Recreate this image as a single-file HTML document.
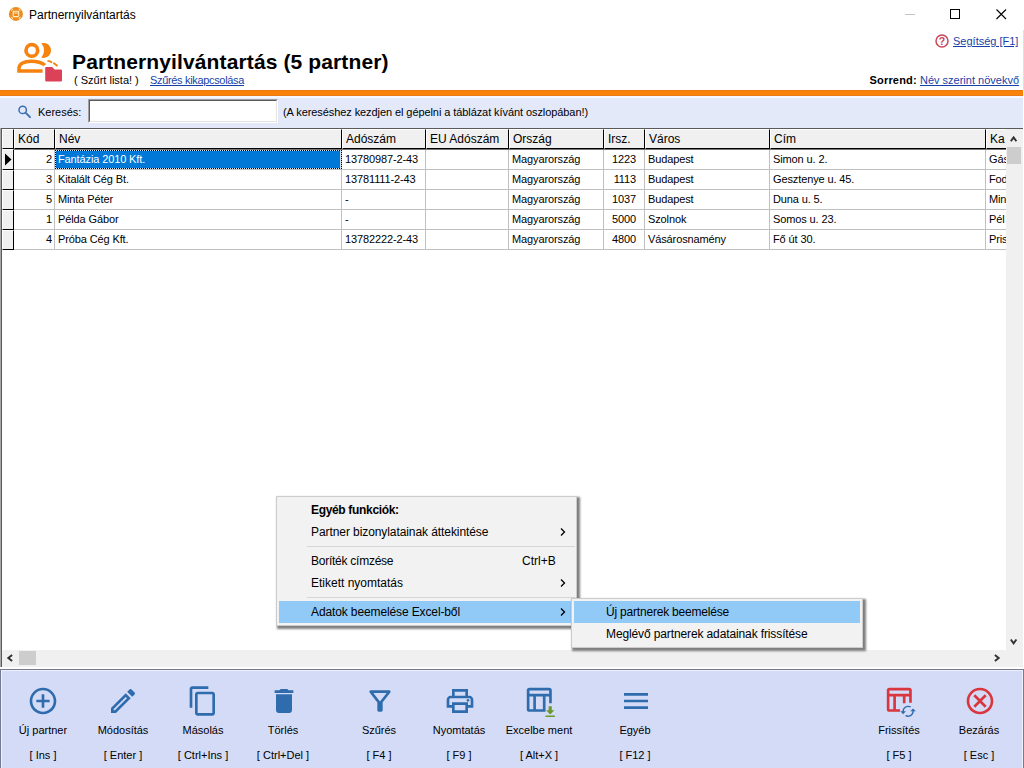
<!DOCTYPE html>
<html lang="hu">
<head>
<meta charset="utf-8">
<title>Partnernyilvántartás</title>
<style>
*{box-sizing:border-box;margin:0;padding:0}
html,body{width:1024px;height:768px;overflow:hidden;background:#fff}
body{position:relative;font-family:"Liberation Sans",sans-serif;font-size:11px;color:#000;line-height:14px}
.abs{position:absolute;white-space:nowrap}
a,.lnk{color:#173fa8;text-decoration:underline}
/* title bar */
#tbtext{left:29px;top:8px;font-size:12px;line-height:15px;color:#000}
/* header */
#h1{left:72px;top:49px;font-size:21px;line-height:26px;font-weight:bold;letter-spacing:.120px}
#sub1{left:74px;top:73px}
#sub2{left:150px;top:73px;letter-spacing:-.330px}
#help{left:953px;top:34px}
#sorr{right:5px;top:73px}
#obar{left:0;top:90px;width:1023px;height:6px;background:#fb8209;border-top:1px solid #e9790f;border-bottom:1px solid #e67a14}
#sbar{left:0;top:96px;width:1023px;height:32px;background:#e4e9fa;border-top:2px solid #f6f7fd}
#slabel{left:38px;top:105px}
#sinput{left:88px;top:99px;width:190px;height:24px;background:#fff;border:1px solid;border-color:#a0a0a0 #fff #fff #a0a0a0}
#sinput i{display:block;width:100%;height:100%;border:1px solid;border-color:#5a5a5a #e3e3e3 #e3e3e3 #5a5a5a}
#shint{left:283px;top:105px;letter-spacing:-.080px}
/* grid */
#grid{left:1px;top:128px;width:1022px;height:539px;background:#fff;border:1px solid #5a5a5a;border-right:none;border-bottom:none;overflow:hidden}
#gl{left:0;top:128px;width:1px;height:539px;background:#a8a8a8}
.hc{position:absolute;top:0;height:20px;background:#f0f0f0;border:1px solid;border-color:#fff #000 #000 #fff;padding:2px 0 0 3px;font-size:12px;line-height:14px;white-space:nowrap;overflow:hidden}
.ic{position:absolute;left:0;width:12px;background:#f0f0f0;border:1px solid;border-color:#fff #000 #000 #fff}
.row{position:absolute;left:12px;height:20px;width:1040px;border-bottom:1px solid #c0c0c0}
.c{position:absolute;top:0;height:20px;border-right:1px solid #c0c0c0;padding:2px 2px 0 3px;white-space:nowrap;overflow:hidden;letter-spacing:-.120px}
.r0 .c{padding-top:3px}
.c.z{padding-right:8px}
.r{text-align:right}
.r0 .c.sel{background:#0078d7;color:#fff;outline:1px dotted #000;outline-offset:-1px;box-shadow:inset 0 0 0 1px #d8e4f0;top:1px;height:19px;padding-top:2px}
#hl2{position:absolute;left:12px;top:20px;width:993px;height:1px;background:#777}
/* scrollbars */
#vs{left:1006px;top:129px;width:17px;height:521px;background:#f0f0f0}
#hs{left:2px;top:650px;width:1021px;height:17px;background:#f0f0f0}
/* toolbar */
#tb{left:0;top:669px;width:1024px;height:105px;background:#d4dbf6;border:1px solid #747a90;box-shadow:inset 0 0 0 1px #eef1fc}
.btn{position:absolute;top:0;width:80px;height:100px;text-align:center}
.btn svg{position:absolute;left:24px;top:14.700px;width:32px;height:32px}
.btn .t{position:absolute;left:0;width:80px;top:53px}
.btn .k{position:absolute;left:0;width:80px;top:78px}
/* menu */
.menu{position:absolute;background:#f2f2f2;border:1px solid #ccc;box-shadow:2px 2px 2px 1px rgba(0,0,0,.5);font-size:12px;line-height:15px}
.mi{position:absolute;left:2px;height:22px;white-space:nowrap}
.mi span{position:absolute;top:4px}
.sep{position:absolute;height:1px;background:#d7d7d7}
.hl{background:#91c9f7}
</style>
</head>
<body>
<!-- title bar -->
<svg class="abs" style="left:8px;top:6px" width="16" height="16" viewBox="8 6 16 16"><circle cx="15.900" cy="13.900" r="7" fill="#ee8a1f"/><g stroke="#fde69a" stroke-width="1.100" stroke-linecap="round"><path d="M11.600 10.300l1.100-1.100M19.100 9.200l1.100 1.100M11.600 17.500l1.100 1.100M19.100 18.600l1.100-1.100"/></g><rect x="13.200" y="11.300" width="5.500" height="5.300" rx=".800" fill="none" stroke="#fdeec4" stroke-width="1.100"/><path d="M13.200 13h5.500" stroke="#fdeec4" stroke-width=".900"/></svg>
<div class="abs" id="tbtext">Partnernyilvántartás</div>
<svg class="abs" style="left:896px;top:0" width="128" height="30" viewBox="0 0 128 30"><path d="M9 14.5h10" stroke="#c4c4c4" stroke-width="1"/><rect x="54.5" y="9.5" width="9" height="9" fill="none" stroke="#000" stroke-width="1"/><path d="M100.5 9.5l9.5 9.5M110 9.5l-9.5 9.5" stroke="#000" stroke-width="1.1" fill="none"/></svg>

<!-- header -->
<svg class="abs" id="picon" style="left:12px;top:38px" width="56" height="50" viewBox="12 38 56 50">
<circle cx="31.850" cy="50.400" r="5.850" fill="none" stroke="#f6830f" stroke-width="3.700"/>
<path d="M42.600 71H19V68.200C19 63.600 24.500 61.250 31 61.250C37.500 61.250 42.300 62.900 45 65.300" fill="none" stroke="#f6830f" stroke-width="3.500"/>
<path d="M41.300 43.230A7.500 7.500 0 1 1 41.300 57.570A10.700 10.700 0 0 0 41.300 43.230z" fill="#f6830f"/>
<path d="M47.500 60.900C51.500 61.600 55.300 63.400 57.500 66.200" fill="none" stroke="#f6830f" stroke-width="1.900" stroke-dasharray="4.800 1.300 20"/>
<path d="M43.700 73V65.500H54l2 2.500H63.500V73z" fill="#fff"/>
<path d="M45.200 68a1 1 0 0 1 1-1h6l2.300 2.600h6.500a1 1 0 0 1 1 1v10a1 1 0 0 1-1 1H46.200a1 1 0 0 1-1-1z" fill="#dc4257"/>
</svg>
<div class="abs" id="h1">Partnernyilvántartás (5 partner)</div>
<div class="abs" id="sub1">( Szűrt lista! )</div>
<div class="abs lnk" id="sub2">Szűrés kikapcsolása</div>
<svg class="abs" style="left:934px;top:33px" width="16" height="16" viewBox="0 0 16 16"><circle cx="8" cy="8" r="6" fill="#fff" stroke="#c8465a" stroke-width="1.500"/><text x="8" y="11.700" font-family="Liberation Sans, sans-serif" font-size="10.500" font-weight="bold" fill="#c8465a" text-anchor="middle">?</text></svg>
<div class="abs lnk" id="help">Segítség [F1]</div>
<div class="abs" id="sorr"><b style="letter-spacing:.200px">Sorrend:</b> <span class="lnk">Név szerint növekvő</span></div>
<div class="abs" id="redge" style="left:1023px;top:30px;width:1px;height:60px;background:#e0e0e0"></div>
<div class="abs" id="obar"></div>

<!-- search bar -->
<div class="abs" id="sbar"></div>
<svg class="abs" style="left:17px;top:103px" width="16" height="16" viewBox="0 0 16 16"><circle cx="5.700" cy="6.900" r="3.700" fill="none" stroke="#3a6fb0" stroke-width="1.500"/><path d="M8.500 9.700l4.500 4.500" stroke="#3a6fb0" stroke-width="1.900" stroke-linecap="round"/></svg>
<div class="abs" id="slabel">Keresés:</div>
<div class="abs" id="sinput"><i></i></div>
<div class="abs" id="shint">(A kereséshez kezdjen el gépelni a táblázat kívánt oszlopában!)</div>

<!-- grid -->
<div class="abs" id="gl"></div>
<div class="abs" id="grid">
<div id="gridinner">
<div class="hc" style="left:0;width:12px"></div>
<div class="hc" style="left:12px;width:41px">Kód</div>
<div class="hc" style="left:53px;width:287px">Név</div>
<div class="hc" style="left:340px;width:84px">Adószám</div>
<div class="hc" style="left:424px;width:83px">EU Adószám</div>
<div class="hc" style="left:507px;width:95px">Ország</div>
<div class="hc" style="left:602px;width:41px">Irsz.</div>
<div class="hc" style="left:643px;width:125px">Város</div>
<div class="hc" style="left:768px;width:216px">Cím</div>
<div class="hc" style="left:984px;width:60px">Ka</div>
<div class="ic" style="top:20px;height:21px"></div>
<div class="row r0" style="top:20px;height:21px">
<div class="c r" style="left:0px;width:41px">2</div>
<div class="c sel" style="left:41px;width:287px">Fantázia 2010 Kft.</div>
<div class="c" style="left:328px;width:84px">13780987-2-43</div>
<div class="c" style="left:412px;width:83px"></div>
<div class="c" style="left:495px;width:95px">Magyarország</div>
<div class="c r z" style="left:590px;width:41px">1223</div>
<div class="c" style="left:631px;width:125px">Budapest</div>
<div class="c" style="left:756px;width:216px">Simon u. 2.</div>
<div class="c" style="left:972px;width:60px">Gás</div>
</div>
<div class="ic" style="top:41px;height:20px"></div>
<div class="row" style="top:41px;height:20px">
<div class="c r" style="left:0px;width:41px">3</div>
<div class="c" style="left:41px;width:287px">Kitalált Cég Bt.</div>
<div class="c" style="left:328px;width:84px">13781111-2-43</div>
<div class="c" style="left:412px;width:83px"></div>
<div class="c" style="left:495px;width:95px">Magyarország</div>
<div class="c r z" style="left:590px;width:41px">1113</div>
<div class="c" style="left:631px;width:125px">Budapest</div>
<div class="c" style="left:756px;width:216px">Gesztenye u. 45.</div>
<div class="c" style="left:972px;width:60px">Fod</div>
</div>
<div class="ic" style="top:61px;height:20px"></div>
<div class="row" style="top:61px;height:20px">
<div class="c r" style="left:0px;width:41px">5</div>
<div class="c" style="left:41px;width:287px">Minta Péter</div>
<div class="c" style="left:328px;width:84px">-</div>
<div class="c" style="left:412px;width:83px"></div>
<div class="c" style="left:495px;width:95px">Magyarország</div>
<div class="c r z" style="left:590px;width:41px">1037</div>
<div class="c" style="left:631px;width:125px">Budapest</div>
<div class="c" style="left:756px;width:216px">Duna u. 5.</div>
<div class="c" style="left:972px;width:60px">Min</div>
</div>
<div class="ic" style="top:81px;height:20px"></div>
<div class="row" style="top:81px;height:20px">
<div class="c r" style="left:0px;width:41px">1</div>
<div class="c" style="left:41px;width:287px">Példa Gábor</div>
<div class="c" style="left:328px;width:84px">-</div>
<div class="c" style="left:412px;width:83px"></div>
<div class="c" style="left:495px;width:95px">Magyarország</div>
<div class="c r z" style="left:590px;width:41px">5000</div>
<div class="c" style="left:631px;width:125px">Szolnok</div>
<div class="c" style="left:756px;width:216px">Somos u. 23.</div>
<div class="c" style="left:972px;width:60px">Pél</div>
</div>
<div class="ic" style="top:101px;height:20px"></div>
<div class="row" style="top:101px;height:20px">
<div class="c r" style="left:0px;width:41px">4</div>
<div class="c" style="left:41px;width:287px">Próba Cég Kft.</div>
<div class="c" style="left:328px;width:84px">13782222-2-43</div>
<div class="c" style="left:412px;width:83px"></div>
<div class="c" style="left:495px;width:95px">Magyarország</div>
<div class="c r z" style="left:590px;width:41px">4800</div>
<div class="c" style="left:631px;width:125px">Vásárosnamény</div>
<div class="c" style="left:756px;width:216px">Fő út 30.</div>
<div class="c" style="left:972px;width:60px">Pris</div>
</div>
<div id="hl2"></div>
<svg class="abs" style="left:3px;top:24px" width="7" height="13" viewBox="0 0 7 13"><path d="M0 0.500L6.500 6.500L0 12.500z" fill="#000"/></svg>
</div>
</div>
<div class="abs" id="vs"><svg class="abs" style="left:0;top:0" width="17" height="17" viewBox="0 0 17 17"><path d="M4.800 12.200L7.600 8.400l2.800 3.800" fill="none" stroke="#303030" stroke-width="1.900"/></svg><div class="abs" style="left:1px;top:18px;width:14px;height:17px;background:#cdcdcd"></div><svg class="abs" style="left:0;top:504px" width="17" height="17" viewBox="0 0 17 17"><path d="M4.800 6.500l2.800 3.800 2.800-3.800" fill="none" stroke="#303030" stroke-width="1.900"/></svg></div>
<div class="abs" id="hs"><svg class="abs" style="left:0;top:0" width="17" height="17" viewBox="0 0 17 17"><path d="M10.100 5L6.300 8l3.800 3" fill="none" stroke="#303030" stroke-width="1.900"/></svg><div class="abs" style="left:17px;top:1px;width:17px;height:14px;background:#cdcdcd"></div><svg class="abs" style="left:987px;top:0" width="17" height="17" viewBox="0 0 17 17"><path d="M5.900 5l3.800 3-3.800 3" fill="none" stroke="#303030" stroke-width="1.900"/></svg></div>

<!-- toolbar -->
<div class="abs" id="tb">
<div class="btn" style="left:2px"><svg viewBox="0 0 24 24"><path fill="#2f6cae" d="M13 7h-2v4H7v2h4v4h2v-4h4v-2h-4V7zm-1-5C6.480 2 2 6.480 2 12s4.480 10 10 10 10-4.480 10-10S17.520 2 12 2zm0 18c-4.410 0-8-3.590-8-8s3.590-8 8-8 8 3.590 8 8-3.590 8-8 8z"/></svg><div class="t">Új partner</div><div class="k">[ Ins ]</div></div>
<div class="btn" style="left:82px"><svg viewBox="0 0 24 24"><path fill="#2f6cae" d="M14.060 9.020l.920.920L5.920 19H5v-.920l9.060-9.060M17.660 3c-.250 0-.510.100-.700.290l-1.830 1.830 3.750 3.750 1.830-1.830c.390-.390.390-1.020 0-1.410l-2.340-2.340c-.200-.200-.450-.290-.710-.290zm-3.600 3.190L3 17.250V21h3.750L17.810 9.940l-3.750-3.750z"/></svg><div class="t">Módosítás</div><div class="k">[ Enter ]</div></div>
<div class="btn" style="left:162px"><svg style="margin-left:0.4px" viewBox="0 0 24 24"><path fill="#2f6cae" d="M16 1H4c-1.100 0-2 .900-2 2v14h2V3h12V1zm3 4H8c-1.100 0-2 .900-2 2v14c0 1.100.900 2 2 2h11c1.100 0 2-.900 2-2V7c0-1.100-.900-2-2-2zm0 16H8V7h11v14z"/></svg><div class="t">Másolás</div><div class="k">[ Ctrl+Ins ]</div></div>
<div class="btn" style="left:242px"><svg style="margin-left:0.5px" viewBox="0 0 24 24"><path fill="#2f6cae" d="M6 19c0 1.100.900 2 2 2h8c1.100 0 2-.900 2-2V7H6v12zM19 4h-3.500l-1-1h-5l-1 1H5v2h14V4z"/></svg><div class="t">Törlés</div><div class="k">[ Ctrl+Del ]</div></div>
<div class="btn" style="left:338px"><svg style="margin-left:0.9px" viewBox="0 0 24 24"><path fill="#2f6cae" d="M7 6h10l-5.010 6.300L7 6zm-2.750-.390C6.270 8.200 10 13 10 13v6c0 .550.450 1 1 1h2c.550 0 1-.450 1-1v-6s3.720-4.800 5.740-7.390c.510-.660.040-1.610-.790-1.610H5.040c-.830 0-1.300.950-.790 1.610z"/></svg><div class="t">Szűrés</div><div class="k">[ F4 ]</div></div>
<div class="btn" style="left:418px"><svg style="margin-left:0.9px" viewBox="0 0 24 24"><path fill="#2f6cae" d="M19 8h-1V3H6v5H5c-1.660 0-3 1.340-3 3v6h4v4h12v-4h4v-6c0-1.660-1.340-3-3-3zM8 5h8v3H8V5zm8 12v2H8v-4h8v2zm2-2v-2H6v2H4v-4c0-.550.450-1 1-1h14c.550 0 1 .450 1 1v4h-2z"/><circle cx="18" cy="11.500" r="1" fill="#2f6cae"/></svg><div class="t">Nyomtatás</div><div class="k">[ F9 ]</div></div>
<div class="btn" style="left:498px"><svg viewBox="0 0 24 24" style="overflow:visible"><path fill="none" stroke="#2f6cae" stroke-width="2" d="M20.600 13.700V4.100a1 1 0 0 0-1-1H4.850a1 1 0 0 0-1 1v14a1 1 0 0 0 1 1H15.900V7.600M3.850 7.600H20.600M8.700 7.600V19.100"/><path fill="#6b9a2c" d="M19.200 16h2.400v3h1.900l-3.100 3.100-3.100-3.100h1.900zM16.900 22.900h7v1.100h-7z"/></svg><div class="t">Excelbe ment</div><div class="k">[ Alt+X ]</div></div>
<div class="btn" style="left:594px"><svg style="margin-left:1.0px" viewBox="0 0 24 24"><path fill="#2f6cae" d="M3 18h18v-2H3v2zm0-5h18v-2H3v2zm0-7v2h18V6H3z"/></svg><div class="t">Egyéb</div><div class="k">[ F12 ]</div></div>
<div class="btn" style="left:858px"><svg viewBox="0 0 24 24" style="overflow:visible"><path fill="none" stroke="#d9363e" stroke-width="2" d="M20.600 13.300V4.100a1 1 0 0 0-1-1H4.850a1 1 0 0 0-1 1v14a1 1 0 0 0 1 1H12.800M3.850 7.600H20.600M8.700 7.600V19.100M15.900 7.600V13.600"/><g transform="translate(12.450 13.350) scale(0.531)"><path fill="#2f6cae" d="M19 8l-4 4h3c0 3.310-2.690 6-6 6-1.010 0-1.970-.250-2.800-.700l-1.460 1.460C8.970 19.540 10.430 20 12 20c4.420 0 8-3.580 8-8h3l-4-4zM6 12c0-3.310 2.690-6 6-6 1.010 0 1.970.250 2.800.700l1.460-1.460C15.030 4.460 13.570 4 12 4c-4.420 0-8 3.580-8 8H1l4 4 4-4H6z"/></g></svg><div class="t">Frissítés</div><div class="k">[ F5 ]</div></div>
<div class="btn" style="left:938px"><svg style="margin-left:1.0px" viewBox="0 0 24 24"><path fill="#d9363e" d="M12 2C6.470 2 2 6.470 2 12s4.470 10 10 10 10-4.470 10-10S17.530 2 12 2zm0 18c-4.410 0-8-3.590-8-8s3.590-8 8-8 8 3.590 8 8-3.590 8-8 8zm3.590-13L12 10.590 8.410 7 7 8.410 10.590 12 7 15.590 8.410 17 12 13.410 15.590 17 17 15.590 13.410 12 17 8.410z"/></svg><div class="t">Bezárás</div><div class="k">[ Esc ]</div></div>
</div>

<!-- menus -->
<div class="menu" style="left:276px;top:496px;width:301px;height:130px">
<div class="mi" style="top:2px;width:295px"><span style="left:32px;font-weight:bold;letter-spacing:-.330px">Egyéb funkciók:</span></div>
<div class="mi" style="top:24px;width:295px"><span style="left:32px;letter-spacing:-.080px">Partner bizonylatainak áttekintése</span><svg class="abs" style="left:280px;top:6px" width="8" height="10" viewBox="0 0 8 10"><path d="M2 1.500l3.500 3.500L2 8.500" fill="none" stroke="#000" stroke-width="1.300"/></svg></div>
<div class="sep" style="left:30px;top:49px;width:268px"></div>
<div class="mi" style="top:53px;width:295px"><span style="left:32px;letter-spacing:-.250px">Boríték címzése</span><span style="left:243px">Ctrl+B</span></div>
<div class="mi" style="top:75px;width:295px"><span style="left:32px">Etikett nyomtatás</span><svg class="abs" style="left:280px;top:6px" width="8" height="10" viewBox="0 0 8 10"><path d="M2 1.500l3.500 3.500L2 8.500" fill="none" stroke="#000" stroke-width="1.300"/></svg></div>
<div class="sep" style="left:30px;top:100px;width:268px"></div>
<div class="mi hl" style="top:104px;width:295px"><span style="left:32px;letter-spacing:-.120px">Adatok beemelése Excel-ből</span><svg class="abs" style="left:280px;top:6px" width="8" height="10" viewBox="0 0 8 10"><path d="M2 1.500l3.500 3.500L2 8.500" fill="none" stroke="#000" stroke-width="1.300"/></svg></div>
</div>
<div class="menu" style="left:571px;top:598px;width:292px;height:50px">
<div class="mi hl" style="top:2px;width:286px"><span style="top:4px;left:32px;letter-spacing:-.200px">Új partnerek beemelése</span></div>
<div class="mi" style="top:24px;width:286px"><span style="left:32px;letter-spacing:-.120px">Meglévő partnerek adatainak frissítése</span></div>
</div>
</body>
</html>
